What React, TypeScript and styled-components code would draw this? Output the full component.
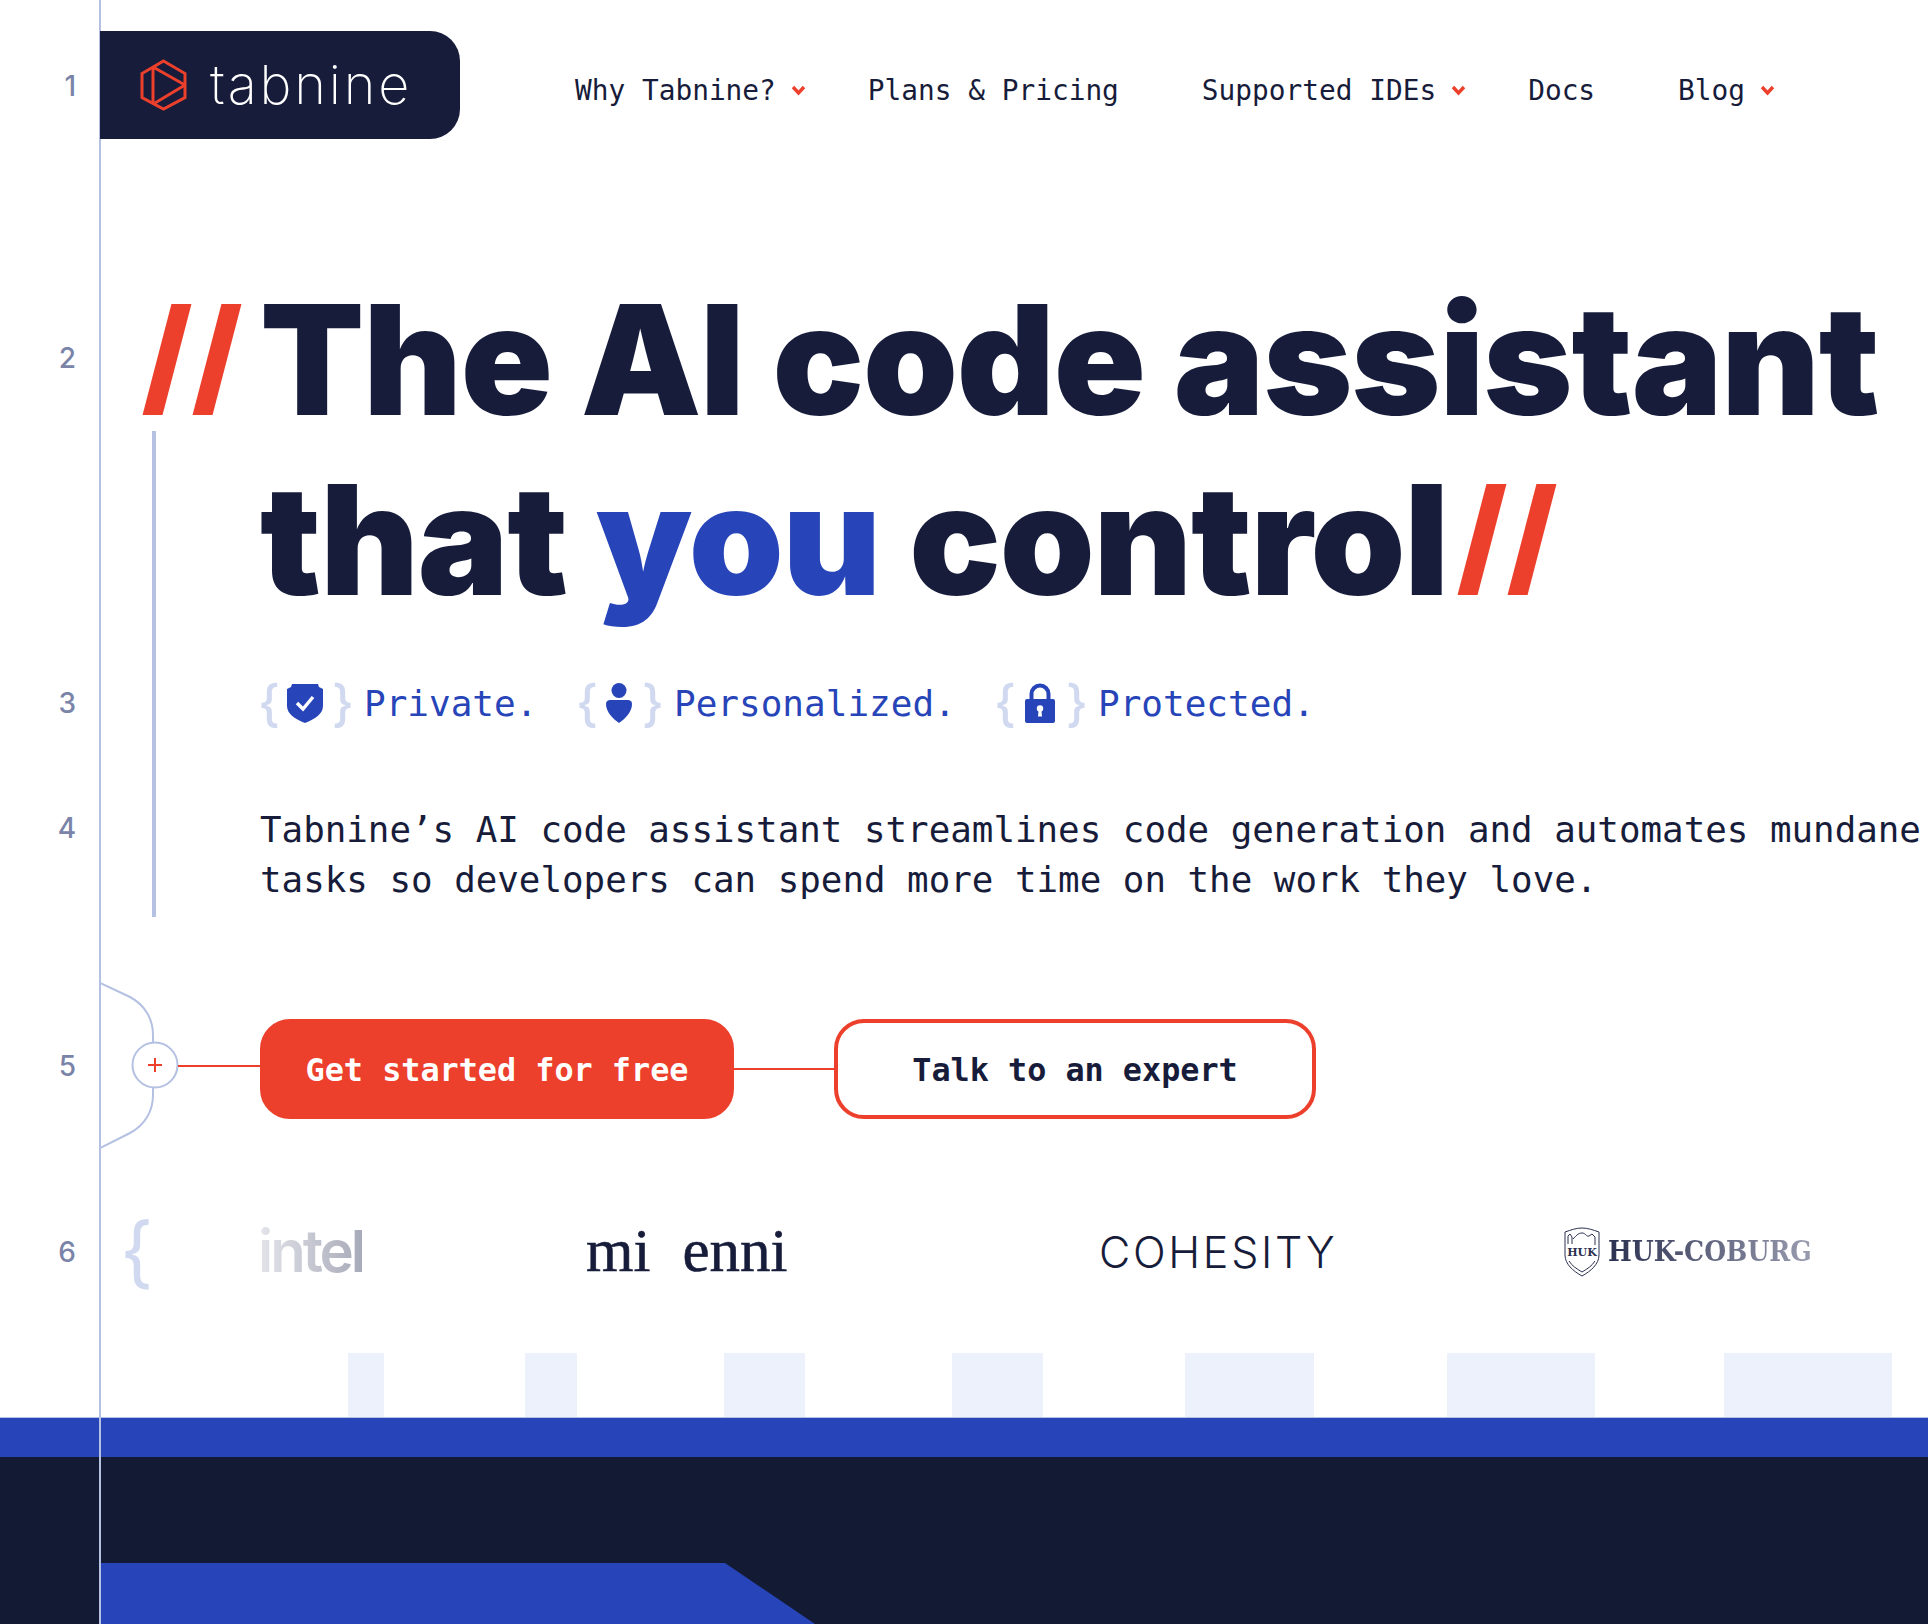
import React from 'react';
import styled, { createGlobalStyle } from 'styled-components';

const NAVY = '#171c3a';
const RED = '#ec402c';
const BLUE = '#2745b9';
const PALE = '#d0d9ef';
const RAIL = '#b5c1e2';
const MONO = '"DejaVu Sans Mono", "Liberation Mono", monospace';

const GlobalStyle = createGlobalStyle`
	html, body {
		margin: 0;
		padding: 0;
		background: #fff;
	}
	* {
		box-sizing: border-box;
	}
`;

const Page = styled.div`
	position: relative;
	display: flex;
	flex-direction: column;
	width: 1928px;
	height: 1624px;
	overflow: hidden;
	background: #fff;
	font-family: Inter, sans-serif;
	color: ${NAVY};

	&::before {
		content: '';
		position: absolute;
		top: 0;
		bottom: 0;
		left: 99px;
		width: 2px;
		background: ${RAIL};
		z-index: 2;
	}
`;

const Row = styled.section<{ $top: number; $height: number }>`
	display: grid;
	grid-template-columns: 100px 1fr;
	flex: none;
	margin-top: ${(p) => p.$top}px;
	height: ${(p) => p.$height}px;
`;

const LineNo = styled.div<{ $height: number }>`
	height: ${(p) => p.$height}px;
	line-height: ${(p) => p.$height}px;
	padding-right: 24px;
	text-align: right;
	font-size: 28px;
	font-weight: 500;
	color: #7a84a8;
`;

const Header = styled.header`
	display: flex;
	align-items: center;
	height: 108px;
`;

const LogoBox = styled.div`
	position: relative;
	z-index: 3;
	display: flex;
	align-items: center;
	gap: 23px;
	width: 360px;
	height: 108px;
	padding-left: 40px;
	border-radius: 0 30px 30px 0;
	background: ${NAVY};
`;

const Wordmark = styled.span`
	font-size: 54px;
	font-weight: 250;
	letter-spacing: 2.8px;
	line-height: 1;
	color: #fff;
`;

const Nav = styled.nav`
	display: flex;
	align-items: center;
	gap: 62px;
	margin-left: 115px;
	padding-top: 10px;
`;

const NavItem = styled.a<{ $plain?: boolean }>`
	display: flex;
	align-items: center;
	gap: 15px;
	margin-right: ${(p) => (p.$plain ? 21 : 0)}px;
	font-family: ${MONO};
	font-size: 27.8px;
	white-space: nowrap;
`;

const Hero = styled.h1`
	margin: 0;
	padding-left: 160px;
	font-size: 152px;
	font-weight: 900;
	line-height: 180px;
	letter-spacing: -1.2px;
	white-space: nowrap;
`;

const Accent = styled.span`
	color: ${BLUE};
`;

const Slashes = styled.span<{ $lead?: boolean }>`
	display: inline-flex;
	gap: 30px;
	width: ${(p) => (p.$lead ? 103 : 80)}px;
	margin-left: ${(p) => (p.$lead ? -103 : 24)}px;
	vertical-align: baseline;
`;

const Slash = styled.span`
	display: inline-block;
	width: 20px;
	height: 111px;
	background: ${RED};
	transform: skewX(-14.6deg);
`;

const Rule = styled.div`
	position: absolute;
	top: 431px;
	left: 152px;
	width: 4px;
	height: 486px;
	background: ${RAIL};
`;

const Badges = styled.div`
	display: flex;
	align-items: center;
	padding-left: 160px;
`;

const Badge = styled.div<{ $width: number }>`
	display: flex;
	align-items: center;
	width: ${(p) => p.$width}px;
`;

const Brace = styled.span<{ $open?: boolean }>`
	width: 18px;
	margin: ${(p) => (p.$open ? '0 2px 0 -2px' : '0')};
	font-family: Inter, sans-serif;
	font-size: 50px;
	font-weight: 500;
	line-height: 60px;
	text-align: center;
	color: ${PALE};
`;

const BadgeIcon = styled.svg<{ $gap: number }>`
	flex: none;
	margin: 0 ${(p) => p.$gap}px;
`;

const BadgeLabel = styled.span`
	margin-left: 14px;
	font-family: ${MONO};
	font-size: 36px;
	white-space: nowrap;
	color: ${BLUE};
`;

const Lede = styled.p`
	margin: 0;
	padding-left: 160px;
	font-family: ${MONO};
	font-size: 35.85px;
	line-height: 50px;
	white-space: pre;
`;

const Actions = styled.div`
	display: flex;
	align-items: center;
`;

const Connector = styled.svg`
	flex: none;
	display: block;
`;

const Button = styled.a<{ $outline?: boolean }>`
	display: flex;
	align-items: center;
	justify-content: center;
	width: ${(p) => (p.$outline ? 482 : 474)}px;
	height: 100px;
	border: 4px solid ${RED};
	border-radius: 30px;
	background: ${(p) => (p.$outline ? '#fff' : RED)};
	color: ${(p) => (p.$outline ? NAVY : '#fff')};
	font-family: ${MONO};
	font-size: 31.8px;
	font-weight: 700;
	white-space: nowrap;
`;

const Link = styled.span`
	width: 100px;
	height: 2px;
	background: ${RED};
`;

const Logos = styled.div`
	display: grid;
	grid-template-columns: 160px 326px 513px 465px auto;
	align-items: center;
	height: 100%;
`;

const BigBrace = styled.span`
	padding-left: 20px;
	margin-bottom: 4px;
	font-size: 78px;
	font-weight: 400;
	line-height: 80px;
	color: ${PALE};
`;

const Intel = styled.span`
	justify-self: start;
	margin: 0 0 3px -2px;
	font-size: 58px;
	font-weight: 600;
	line-height: 1;
	letter-spacing: -3px;
	background: linear-gradient(90deg, #e4e5eb, #a7aab8);
	-webkit-background-clip: text;
	background-clip: text;
	color: transparent;
`;

const Serif = styled.span`
	display: flex;
	gap: 32px;
	margin-bottom: 4px;
	font-family: "Liberation Serif", serif;
	font-size: 61px;
	line-height: 1;
	-webkit-text-stroke: 0.6px ${NAVY};
	color: ${NAVY};
`;

const Cohesity = styled.span`
	font-size: 43px;
	font-weight: 300;
	letter-spacing: 2.7px;
	line-height: 1;
	color: ${NAVY};
`;

const Huk = styled.span`
	display: flex;
	align-items: center;
	gap: 8px;
	margin-bottom: 2px;
`;

const HukName = styled.span`
	font-family: "DejaVu Serif Condensed", "DejaVu Serif", serif;
	font-size: 28px;
	font-weight: 700;
	font-stretch: condensed;
	line-height: 1;
	white-space: nowrap;
	background: linear-gradient(90deg, #2b3050, #9a9db0);
	-webkit-background-clip: text;
	background-clip: text;
	color: transparent;
`;

const Skyline = styled.div`
	display: flex;
	flex: none;
	height: 64px;
	margin-top: 51px;
`;

const Bar = styled.span<{ $left: number; $width: number }>`
	flex: none;
	width: ${(p) => p.$width}px;
	margin-left: ${(p) => p.$left}px;
	background: #edf1fc;
`;

const Band = styled.div`
	flex: none;
	height: 40px;
	border-top: 1px solid ${RAIL};
	background: ${BLUE};
`;

const Dark = styled.div`
	flex: 1;
	display: flex;
	flex-direction: column;
	justify-content: flex-end;
	background: #131a33;
`;

const Ramp = styled.div`
	width: 715px;
	height: 61px;
	margin-left: 100px;
	background: ${BLUE};
	clip-path: polygon(0 0, 625px 0, 715px 100%, 0 100%);
`;

const Chevron = () => (
	<svg width="15" height="11" viewBox="0 0 15 11">
		<path d="M2 2l5.500 6L13 2" fill="none" stroke={RED} strokeWidth="3.400" />
	</svg>
);

const TabnineMark = () => (
	<svg width="47" height="52" viewBox="0 0 47 52" fill="none" stroke={RED} strokeWidth="3">
		<path d="M23.500 2l21.500 12.500v24L23.500 50 2 38.500v-24z" />
		<path d="M13 8v36M13 8l32 18M45 26L15 44" />
	</svg>
);

const ShieldIcon = () => (
	<BadgeIcon $gap={9} width="36" height="40" viewBox="0 0 36 40">
		<path d="M5 1h26l1 3 4 2v17c0 8-8 13-18 17C8 36 0 31 0 23V6l4-2z" fill={BLUE} />
		<path d="M10 20l6 6 10-12" fill="none" stroke="#fff" strokeWidth="3.400" />
	</BadgeIcon>
);

const PersonIcon = () => (
	<BadgeIcon $gap={10} width="26" height="40" viewBox="0 0 26 40">
		<circle cx="13" cy="7.500" r="7.500" fill={BLUE} />
		<path d="M4 17h18c2 0 4 1 4 4 0 8-7 15-13 19C7 36 0 29 0 21c0-3 2-4 4-4z" fill={BLUE} />
	</BadgeIcon>
);

const LockIcon = () => (
	<BadgeIcon $gap={11} width="30" height="40" viewBox="0 0 30 40">
		<path d="M6.500 18V11a8.500 8.500 0 0 1 17 0v7" fill="none" stroke={BLUE} strokeWidth="4" />
		<rect x="0" y="16" width="30" height="24" rx="2" fill={BLUE} />
		<circle cx="15" cy="25.500" r="3.200" fill="#fff" />
		<path d="M13.600 27h2.800l.6 6.500h-4z" fill="#fff" />
	</BadgeIcon>
);

const HukShield = () => (
	<svg width="36" height="50" viewBox="0 0 36 50" fill="none" stroke="#2b3050" strokeWidth="1">
		<path d="M1 5c6-2 11-4 17-4s11 2 17 4v23c0 9-8 16-17 21C9 44 1 37 1 28z" />
		<path d="M4 17V9l2-2 2 3v7M9 12c3-3 5-6 9-6s4 4 7 3l3-2 3 3v8" />
		<path d="M5 34c3 5 8 8 13 11 5-3 10-6 13-11" />
		<text
			x="18"
			y="29"
			textAnchor="middle"
			fontFamily='"DejaVu Serif", serif'
			fontSize="11"
			fontWeight="700"
			fill="#2b3050"
			stroke="none"
		>
			HUK
		</text>
	</svg>
);

const navLinks = [
	{ label: 'Why Tabnine?', menu: true },
	{ label: 'Plans & Pricing', menu: false },
	{ label: 'Supported IDEs', menu: true },
	{ label: 'Docs', menu: false },
	{ label: 'Blog', menu: true },
];

const bars = [
	{ left: 348, width: 36 },
	{ left: 141, width: 52 },
	{ left: 147, width: 81 },
	{ left: 147, width: 91 },
	{ left: 142, width: 129 },
	{ left: 133, width: 148 },
	{ left: 129, width: 168 },
];

const App = (): JSX.Element => {
	return (
		<Page>
			<GlobalStyle />
			<Rule />
			<Row $top={31} $height={108}>
				<LineNo $height={110}>1</LineNo>
				<Header>
					<LogoBox>
						<TabnineMark />
						<Wordmark>tabnine</Wordmark>
					</LogoBox>
					<Nav>
						{navLinks.map((link) => (
							<NavItem key={link.label} $plain={!link.menu}>
								{link.label}
								{link.menu && <Chevron />}
							</NavItem>
						))}
					</Nav>
				</Header>
			</Row>

			<Row $top={131} $height={360}>
				<LineNo $height={176}>2</LineNo>
				<Hero>
					<Slashes $lead>
						<Slash />
						<Slash />
					</Slashes>
					The AI code assistant
					<br />
					that <Accent>you</Accent> control
					<Slashes>
						<Slash />
						<Slash />
					</Slashes>
				</Hero>
			</Row>

			<Row $top={42} $height={60}>
				<LineNo $height={62}>3</LineNo>
				<Badges>
					<Badge $width={318}>
						<Brace $open>{'{'}</Brace>
						<ShieldIcon />
						<Brace>{'}'}</Brace>
						<BadgeLabel>Private.</BadgeLabel>
					</Badge>
					<Badge $width={418}>
						<Brace $open>{'{'}</Brace>
						<PersonIcon />
						<Brace>{'}'}</Brace>
						<BadgeLabel>Personalized.</BadgeLabel>
					</Badge>
					<Badge $width={400}>
						<Brace $open>{'{'}</Brace>
						<LockIcon />
						<Brace>{'}'}</Brace>
						<BadgeLabel>Protected.</BadgeLabel>
					</Badge>
				</Badges>
			</Row>

			<Row $top={73} $height={100}>
				<LineNo $height={47}>4</LineNo>
				<Lede>
					Tabnine’s AI code assistant streamlines code generation and automates mundane
					{'\n'}tasks so developers can spend more time on the work they love.
				</Lede>
			</Row>

			<Row $top={75} $height={178}>
				<LineNo $height={172}>5</LineNo>
				<Actions>
					<Connector width="160" height="178" viewBox="0 0 160 178" fill="none">
						<path
							d="M0 3l30 14c15 8 23 22 23 38v7M53 108v7c0 16-8 30-23 38L0 168"
							stroke={RAIL}
							strokeWidth="2"
						/>
						<circle cx="55" cy="85" r="22.500" stroke={RAIL} strokeWidth="2" />
						<path d="M55 78v14M48 85h14M78 86h82" stroke={RED} strokeWidth="2" />
					</Connector>
					<Button>Get started for free</Button>
					<Link />
					<Button $outline>Talk to an expert</Button>
				</Actions>
			</Row>

			<Row $top={44} $height={100}>
				<LineNo $height={101}>6</LineNo>
				<Logos>
					<BigBrace>{'{'}</BigBrace>
					<Intel>intel</Intel>
					<Serif>
						<span>mi</span>
						<span>enni</span>
					</Serif>
					<Cohesity>COHESITY</Cohesity>
					<Huk>
						<HukShield />
						<HukName>HUK-COBURG</HukName>
					</Huk>
				</Logos>
			</Row>

			<Skyline>
				{bars.map((bar) => (
					<Bar key={bar.left + bar.width} $left={bar.left} $width={bar.width} />
				))}
			</Skyline>
			<Band />
			<Dark>
				<Ramp />
			</Dark>
		</Page>
	);
};

export default App;
